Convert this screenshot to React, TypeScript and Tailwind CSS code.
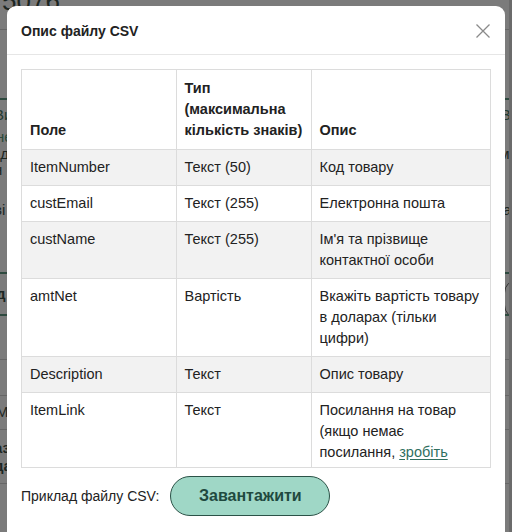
import React from 'react';

type Row = { field: string; type: string; desc: React.ReactNode };

const rows: Row[] = [
  { field: 'ItemNumber', type: 'Текст (50)', desc: 'Код товару' },
  { field: 'custEmail', type: 'Текст (255)', desc: 'Електронна пошта' },
  { field: 'custName', type: 'Текст (255)', desc: "Ім'я та прізвище контактної особи" },
  { field: 'amtNet', type: 'Вартість', desc: 'Вкажіть вартість товару в доларах (тільки цифри)' },
  { field: 'Description', type: 'Текст', desc: 'Опис товару' },
  {
    field: 'ItemLink',
    type: 'Текст',
    desc: (
      <>
        Посилання на товар (якщо немає посилання,{' '}
        <a href="#" className="text-[#2f6f5f] underline underline-offset-2">
          зробіть
        </a>{' '}
        відповідну сторінку товару)
      </>
    ),
  },
];

function Backdrop() {
  // dimmed page behind the modal, only its edges show
  return (
    <div className="flex flex-col text-[15px] text-[#1d2622]">
      <div className="h-[30px] border-b border-[#666] overflow-hidden">
        <div className="text-[26px] leading-[26px] -mt-[12px] pl-[2px] text-[#1d2622]">5076</div>
      </div>
      <div className="h-[70px] border-b-2 border-[#2e4a3f]" />
      <div className="flex justify-between h-[26px] items-end text-[#233a30]">
        <span className="-ml-[6px]">Ви</span>
        <span className="-mr-[2px]">Ві</span>
      </div>
      <div className="flex justify-between h-[20px] text-[#2c4a3c]">
        <span className="-ml-[4px]">не</span>
        <span />
      </div>
      <div className="flex justify-between h-[16px] leading-[16px]">
        <span className="-ml-[8px]">нд:</span>
        <span className="-mr-[6px]">ма</span>
      </div>
      <div className="flex justify-between h-[40px] leading-[16px]">
        <span className="-ml-[6px]">н</span>
        <span className="mr-[-4px]">к</span>
      </div>
      <div className="flex justify-between h-[70px] leading-[16px]">
        <span className="-ml-[6px]">ві</span>
        <span className="-mr-[6px]">аз</span>
      </div>
      <div className="h-[2px] bg-[#2e4a3f]" />
      <div className="flex justify-between h-[40px] items-center font-bold">
        <span className="-ml-[4px]">д</span>
        <span className="w-[28px] h-[40px] rounded-full border border-[#333] -mr-[20px] mt-[10px]" />
      </div>
      <div className="h-[2px] bg-[#2e4a3f]" />
      <div className="h-[44px] border-b border-[#666]" />
      <div className="flex justify-between h-[36px] items-center border-b border-[#666]">
        <span className="-ml-[8px]">н</span>
        <span />
      </div>
      <div className="flex justify-between h-[34px] items-center border-b border-[#666]">
        <span className="-ml-[4px]">М</span>
        <span />
      </div>
      <div className="flex flex-col h-[54px] justify-center leading-[18px] font-bold border-b border-[#666]">
        <span className="-ml-[6px]">аз</span>
        <span className="-ml-[6px]">да</span>
      </div>
    </div>
  );
}

export default function App() {
  return (
    <div
      className="relative h-[532px] w-[512px] overflow-hidden bg-[#7b7b7b]"
      style={{ fontFamily: '"Liberation Sans", Arial, Helvetica, sans-serif' }}
    >
      <Backdrop />
      <div className="absolute right-0 top-0 h-full w-[3px] bg-[#6b6b6b]" />

      <div className="absolute left-[7px] top-[6px] w-[498px] h-[560px] rounded-t-[9px] bg-white">
        <div className="flex items-center justify-between h-[49px] border-b border-[#e6e6e6] pl-[14px] pr-[14px] pt-[2px]">
          <h2 className="text-[14px] font-bold text-[#222]">Опис файлу CSV</h2>
          <button className="w-[16px] h-[16px] flex items-center justify-center text-[#8a8a8a]">
            <svg width="16" height="16" viewBox="0 0 16 16" fill="none" stroke="currentColor" strokeWidth="1.3">
              <path d="M1.5 1.5 L14.5 14.5 M14.5 1.5 L1.5 14.5" />
            </svg>
          </button>
        </div>

        <div className="px-[14px] pt-[14px]">
          <div className="max-h-[399px] overflow-y-auto border border-[#dcdcdc] [scrollbar-width:none]">
            <table className="w-full border-collapse text-[14.5px] leading-[21px] text-[#222]">
              <thead>
                <tr>
                  <th className="w-[154px] border border-[#dcdcdc] border-t-0 border-l-0 px-[8px] pt-[8px] pb-[8px] text-left align-bottom font-bold">
                    Поле
                  </th>
                  <th className="w-[135px] border border-[#dcdcdc] border-t-0 px-[8px] pt-[8px] pb-[8px] text-left align-bottom font-bold">
                    Тип (максимальна кількість знаків)
                  </th>
                  <th className="border border-[#dcdcdc] border-t-0 border-r-0 px-[8px] pt-[8px] pb-[8px] text-left align-bottom font-bold">
                    Опис
                  </th>
                </tr>
              </thead>
              <tbody>
                {rows.map((r, i) => (
                  <tr key={r.field} className={i % 2 === 0 ? 'bg-[#f2f2f2]' : 'bg-white'}>
                    <td className="border border-[#dcdcdc] border-l-0 px-[8px] py-[7px] align-top">{r.field}</td>
                    <td className="border border-[#dcdcdc] px-[8px] py-[7px] align-top">{r.type}</td>
                    <td className="border border-[#dcdcdc] border-r-0 px-[8px] py-[7px] align-top">{r.desc}</td>
                  </tr>
                ))}
              </tbody>
            </table>
          </div>

          <div className="flex items-center gap-[11px] mt-[8px]">
            <span className="text-[14px] text-[#222]">Приклад файлу CSV:</span>
            <button className="w-[160px] h-[40px] rounded-full border border-[#2b5247] bg-[#9fd7c6] text-[16px] font-bold text-[#1f4a3f]">
              Завантажити
            </button>
          </div>
        </div>
      </div>
    </div>
  );
}
